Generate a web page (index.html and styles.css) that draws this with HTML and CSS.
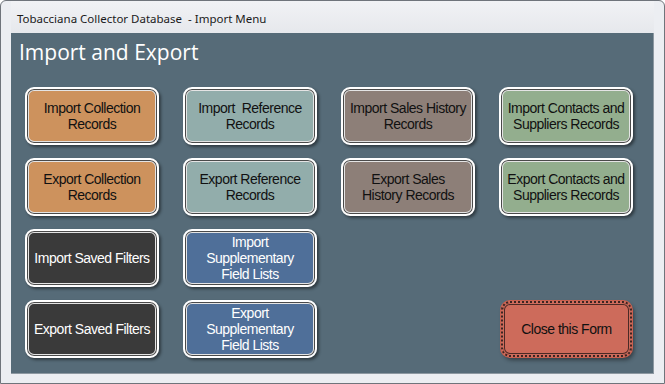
FILE: index.html
```html
<!DOCTYPE html>
<html lang="en">
<head>
    <meta charset="UTF-8">
    <title>Tobacciana Collector Database - Import Menu</title>
    <link rel="stylesheet" href="styles.css">
</head>
<body>
    <div class="window">
        <div class="titlebar">Tobacciana Collector Database&nbsp; - Import Menu</div>
        <div class="panel">
            <h1>Import and Export</h1>
            <div class="grid">
                <button class="btn orange">Import Collection<br>Records</button>
                <button class="btn teal">Import&nbsp; Reference<br>Records</button>
                <button class="btn taupe">Import Sales History<br>Records</button>
                <button class="btn green">Import Contacts and<br>Suppliers Records</button>

                <button class="btn orange">Export Collection<br>Records</button>
                <button class="btn teal">Export Reference<br>Records</button>
                <button class="btn taupe">Export Sales<br>History Records</button>
                <button class="btn green">Export Contacts and<br>Suppliers Records</button>

                <button class="btn dark">Import Saved Filters</button>
                <button class="btn blue">Import<br>Supplementary<br>Field Lists</button>
                <div></div>
                <div></div>

                <button class="btn dark">Export Saved Filters</button>
                <button class="btn blue">Export<br>Supplementary<br>Field Lists</button>
                <div></div>
                <button class="btn close">Close this Form</button>
            </div>
        </div>
    </div>
</body>
</html>
```

FILE: styles.css
```css
body {
    margin: 0;
    background: #fff;
}
.window {
    width: 665px;
    height: 384px;
    box-sizing: border-box;
    border: 1px solid #6f747b;
    border-radius: 6px 6px 0 0;
    background: #eceef2;
    padding: 0 10px 9px 10px;
    display: flex;
    flex-direction: column;
}
.titlebar {
    height: 32px;
    line-height: 36px;
    padding-left: 6px;
    font-family: "Noto Sans", "Open Sans", sans-serif;
    font-size: 11.5px;
    color: #1a1a1a;
    background: linear-gradient(#f1f2f5, #e6e8ec);
}
.panel {
    flex: 1;
    background: #566b78;
    padding: 0 0 0 14px;
    border-right: 1px solid #8d98a1;
    border-bottom: 1px solid #8d98a1;
}
h1 {
    margin: 0;
    height: 54px;
    padding-top: 5px;
    box-sizing: border-box;
    margin-left: -6px;
    font-family: "Open Sans", "DejaVu Sans", sans-serif;
    font-weight: normal;
    font-size: 21px;
    color: #fff;
}
.grid {
    display: grid;
    grid-template-columns: repeat(4, 134px);
    grid-auto-rows: 58px;
    column-gap: 24px;
    row-gap: 13px;
}
.btn {
    box-sizing: border-box;
    border: 2px solid #fff;
    border-radius: 9px;
    box-shadow: inset 0 0 0 1px #4a4a4a, inset 0 0 0 2px #e4e4e4, 2px 2px 3px rgba(0, 0, 0, 0.45);
    font-family: "Liberation Sans", Arial, sans-serif;
    font-size: 14px;
    letter-spacing: -0.5px;
    line-height: 16px;
    color: #111;
    padding: 0;
    text-align: center;
}
.orange { background: #cd925d; }
.teal { background: #92adab; }
.taupe { background: #8d7f78; }
.green { background: #93ae8e; }
.dark { background: #3a3a3a; color: #fff; }
.blue { background: #4f6f99; color: #fff; }
.close {
    background: #cd6b5b;
    border: 2px dotted #3b2422;
    box-shadow: 0 0 0 1px #c9604f, inset 0 0 0 1px #cd6b5b, inset 0 0 0 2px #4a2a26, 2px 3px 4px rgba(0, 0, 0, 0.45);
    margin: 1px 1px 1px 2px;
}
```
